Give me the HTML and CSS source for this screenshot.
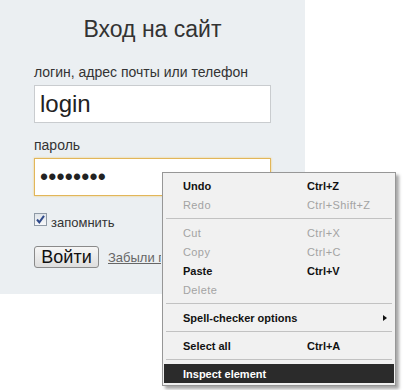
FILE: index.html
```html
<!DOCTYPE html>
<html lang="ru">
<head>
    <meta charset="UTF-8">
    <title>Вход на сайт</title>
    <link rel="stylesheet" href="styles.css">
</head>
<body>

    <!-- Форма входа -->
    <div class="login-panel">
        <h1 class="login-title">Вход на сайт</h1>
        <label class="field-label">логин, адрес почты или телефон</label>
        <div class="field">login</div>
        <label class="field-label">пароль</label>
        <div class="field field-focused"><span class="dots">&bull;&bull;&bull;&bull;&bull;&bull;&bull;&bull;</span></div>
        <div class="remember-row">
            <span class="checkbox">
                <svg width="11" height="11" viewBox="0 0 11 11"><path d="M2 5.5 L4.3 8.3 L9 1.8" fill="none" stroke="#2f4a8a" stroke-width="2"/></svg>
            </span>
            <span class="remember-text">запомнить</span>
        </div>
        <div class="actions-row">
            <button class="login-button">Войти</button>
            <a class="forgot-link" href="#">Забыли пароль?</a>
        </div>
    </div>

    <!-- Контекстное меню -->
    <div class="context-menu">
        <div class="menu-item bold"><span class="item-label">Undo</span><span>Ctrl+Z</span></div>
        <div class="menu-item disabled"><span class="item-label">Redo</span><span>Ctrl+Shift+Z</span></div>
        <div class="menu-separator"></div>
        <div class="menu-item disabled"><span class="item-label">Cut</span><span>Ctrl+X</span></div>
        <div class="menu-item disabled"><span class="item-label">Copy</span><span>Ctrl+C</span></div>
        <div class="menu-item bold"><span class="item-label">Paste</span><span>Ctrl+V</span></div>
        <div class="menu-item disabled"><span class="item-label">Delete</span></div>
        <div class="menu-separator"></div>
        <div class="menu-item bold"><span class="item-label item-wide">Spell-checker options</span><span class="submenu-arrow"></span></div>
        <div class="menu-separator"></div>
        <div class="menu-item bold"><span class="item-label">Select all</span><span>Ctrl+A</span></div>
        <div class="menu-separator"></div>
        <div class="menu-item bold active"><span class="item-label">Inspect element</span></div>
    </div>

</body>
</html>
```

FILE: styles.css
```css
/* Общие стили */
body {
    margin: 0;
    background-color: #ffffff;
    font-family: 'Liberation Sans', Arial, sans-serif;
    color: #333333;
}

/* Панель входа */
.login-panel {
    width: 305px;
    height: 294px;
    box-sizing: border-box;
    padding: 14px 34px 0 34px;
    background-color: #ebeff2;
    display: flex;
    flex-direction: column;
}

.login-title {
    margin: 0 0 19px 0;
    font-size: 23px;
    font-weight: normal;
    line-height: 30px;
    text-align: center;
    color: #333333;
}

.field-label {
    font-size: 14px;
    line-height: 18px;
    margin-bottom: 4px;
}

.field {
    height: 38px;
    box-sizing: border-box;
    border: 1px solid #c9cccf;
    background-color: #ffffff;
    padding-left: 5px;
    font-size: 24px;
    line-height: 36px;
    color: #222222;
    margin-bottom: 13px;
}

.field-focused {
    border-color: #e2b659;
    box-shadow: 0 0 2px #f0cc80;
    margin-bottom: 17px;
}

.dots {
    font-size: 23px;
    letter-spacing: 0.2px;
    color: #222222;
}

/* Запомнить */
.remember-row {
    display: flex;
    align-items: center;
    gap: 4px;
    font-size: 13px;
    line-height: 18px;
    margin-bottom: 14px;
}

.checkbox {
    width: 11px;
    height: 11px;
    border: 1px solid #8f9aa6;
    background: linear-gradient(#dfe4ea, #f7f8fa);
    margin-bottom: 6px;
    display: flex;
}

/* Кнопка и ссылка */
.actions-row {
    display: flex;
    align-items: center;
    gap: 9px;
}

.login-button {
    width: 65px;
    height: 22px;
    padding: 0;
    font-family: 'Liberation Sans', Arial, sans-serif;
    font-size: 18px;
    line-height: 20px;
    color: #111111;
    border: 1px solid #8a8a8a;
    border-radius: 3px;
    background: linear-gradient(#f6f6f6, #dedede);
}

/* ссылка уходит под меню */
.forgot-link {
    display: block;
    width: 53px;
    overflow: hidden;
    font-size: 13px;
    color: #666666;
    white-space: nowrap;
}

/* Контекстное меню */
.context-menu {
    position: absolute;
    left: 162px;
    top: 172px;
    width: 234px;
    box-sizing: border-box;
    padding: 3px 1px 2px 1px;
    background-color: #f1f1f1;
    border: 1px solid #979797;
    box-shadow: 3px 3px 3px rgba(0, 0, 0, 0.35);
    font-size: 11px;
}

.menu-item {
    display: flex;
    align-items: center;
    height: 19px;
    padding-left: 19px;
    color: #111111;
}

.menu-item.bold {
    font-weight: bold;
}

.menu-item.disabled {
    color: #a3a3a3;
    letter-spacing: 0.4px;
}

.menu-item.active {
    background-color: #2b2b2b;
    color: #ffffff;
}

.item-label {
    width: 124px;
}

.item-wide {
    width: 200px;
}

.submenu-arrow {
    width: 0;
    height: 0;
    border-top: 3px solid transparent;
    border-bottom: 3px solid transparent;
    border-left: 4px solid #111111;
}

.menu-separator {
    height: 1px;
    margin: 4px 2px;
    background-color: #c2c2c2;
}
```
